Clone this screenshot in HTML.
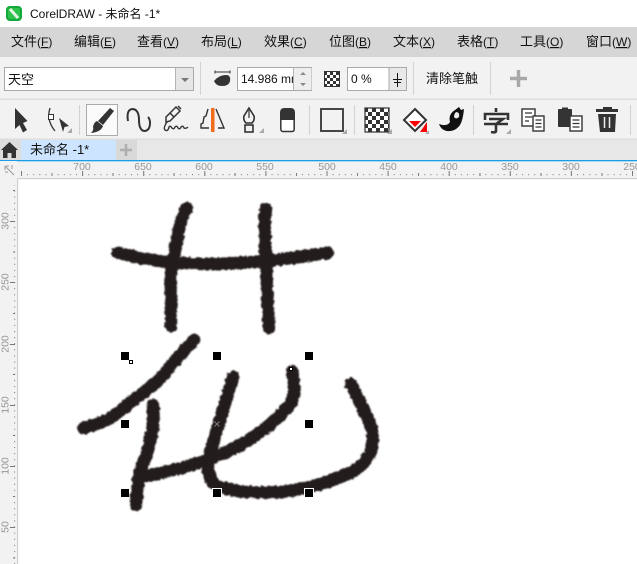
<!DOCTYPE html>
<html><head><meta charset="utf-8"><style>
html,body{margin:0;padding:0;background:#fff;width:637px;height:564px;overflow:hidden}
svg{display:block}
text{font-family:"Liberation Sans","Noto Sans CJK SC",sans-serif;fill:#111}
.m{font-size:13px}
.r{font-size:10.5px;fill:#979797;text-anchor:middle}
</style></head><body>
<svg width="637" height="564" viewBox="0 0 637 564" xmlns="http://www.w3.org/2000/svg">
<defs>
<filter id="rough" x="-5%" y="-5%" width="110%" height="110%">
<feTurbulence type="fractalNoise" baseFrequency="0.28" numOctaves="2" seed="4" result="n"/>
<feDisplacementMap in="SourceGraphic" in2="n" scale="4" xChannelSelector="R" yChannelSelector="G"/>
<feGaussianBlur stdDeviation="0.8"/>
</filter>
<pattern id="hd" x="21" y="0" width="6.11" height="10" patternUnits="userSpaceOnUse"><rect x="0" y="4" width="1" height="1.2" fill="#888"/></pattern>
<pattern id="vd" x="0" y="221" width="10" height="6.11" patternUnits="userSpaceOnUse"><rect x="4" y="0" width="1.2" height="1" fill="#888"/></pattern>
<pattern id="ck" width="6" height="6" patternUnits="userSpaceOnUse"><rect width="6" height="6" fill="#fff"/><rect width="3" height="3" fill="#333"/><rect x="3" y="3" width="3" height="3" fill="#333"/></pattern>
<pattern id="ck2" width="8" height="8" patternUnits="userSpaceOnUse"><rect width="8" height="8" fill="#fff"/><rect width="4" height="4" fill="#333"/><rect x="4" y="4" width="4" height="4" fill="#333"/></pattern>
</defs>

<!-- title bar -->
<rect width="637" height="27" fill="#fff"/>
<rect x="6" y="6" width="16" height="15" rx="4" fill="#12a83a"/>
<rect x="8" y="8" width="12" height="11" rx="2" fill="#2dc24e"/>
<path d="M10 9 L18 18" stroke="#e6f5e6" stroke-width="3"/>
<text x="30" y="18" style="font-size:12px">CorelDRAW - 未命名 -1*</text>

<!-- menu -->
<rect y="27" width="637" height="30" fill="#d6d6d6"/>
<g class="m">
<text class="m" x="11" y="46">文件<tspan style="font-size:12px">(<tspan text-decoration="underline">F</tspan>)</tspan></text>
<text class="m" x="74" y="46">编辑<tspan style="font-size:12px">(<tspan text-decoration="underline">E</tspan>)</tspan></text>
<text class="m" x="137" y="46">查看<tspan style="font-size:12px">(<tspan text-decoration="underline">V</tspan>)</tspan></text>
<text class="m" x="201" y="46">布局<tspan style="font-size:12px">(<tspan text-decoration="underline">L</tspan>)</tspan></text>
<text class="m" x="264" y="46">效果<tspan style="font-size:12px">(<tspan text-decoration="underline">C</tspan>)</tspan></text>
<text class="m" x="329" y="46">位图<tspan style="font-size:12px">(<tspan text-decoration="underline">B</tspan>)</tspan></text>
<text class="m" x="393" y="46">文本<tspan style="font-size:12px">(<tspan text-decoration="underline">X</tspan>)</tspan></text>
<text class="m" x="457" y="46">表格<tspan style="font-size:12px">(<tspan text-decoration="underline">T</tspan>)</tspan></text>
<text class="m" x="520" y="46">工具<tspan style="font-size:12px">(<tspan text-decoration="underline">O</tspan>)</tspan></text>
<text class="m" x="586" y="46">窗口<tspan style="font-size:12px">(<tspan text-decoration="underline">W</tspan>)</tspan></text>
</g>

<!-- property bar -->
<rect y="57" width="637" height="82" fill="#f2f2f2"/>
<rect y="98.500" width="637" height="1.200" fill="#d9d9d9"/>
<rect x="4.500" y="67.500" width="189" height="23" fill="#fff" stroke="#a9a9a9"/>
<rect x="176" y="68" width="17" height="22" fill="#e6e6e6"/>
<rect x="175" y="68" width="1" height="22" fill="#b5b5b5"/>
<path d="M181 78 h8 l-4 4 z" fill="#777"/>
<text class="m" x="8" y="84">天空</text>
<rect x="200" y="62" width="1" height="33" fill="#d2d2d2"/>
<path d="M215 72 h15 M215 70.500 v3 M230 70.500 v3" stroke="#333" stroke-width="1" fill="none"/>
<path d="M214 81 Q219 75 226 75 Q231 75 230 81 Q229 86 222 86 Q216 86 214 81 Z" fill="#333"/>
<rect x="237.500" y="67.500" width="74" height="23" fill="#fff" stroke="#a9a9a9"/>
<rect x="293.500" y="68" width="18" height="22" fill="#eee"/>
<rect x="293" y="68" width="1" height="22" fill="#b5b5b5"/>
<path d="M300 75 l3 -3 l3 3 z M300 83 l3 3 l3 -3 z" fill="#888"/>
<svg x="238" y="68" width="55" height="22"><text x="3" y="15" style="font-size:12px">14.986 mm</text></svg>
<rect x="324" y="71" width="16" height="16" fill="url(#ck)"/>
<rect x="324.500" y="71.500" width="15" height="15" fill="none" stroke="#333"/>
<rect x="347.500" y="67.500" width="59" height="23" fill="#fff" stroke="#a9a9a9"/>
<rect x="389" y="68" width="17" height="22" fill="#e8e8e8"/>
<rect x="388.500" y="68" width="1" height="22" fill="#a9a9a9"/>
<path d="M397.500 73 v14 M393 79.500 h9 M394 82.500 h7" stroke="#111" stroke-width="1" fill="none"/>
<text x="351" y="83" style="font-size:12px">0 %</text>
<rect x="413" y="62" width="1" height="33" fill="#d2d2d2"/>
<text class="m" x="426" y="83">清除笔触</text>
<rect x="490" y="62" width="1" height="33" fill="#d2d2d2"/>
<path d="M510 78.500 h17 M518.500 70 v17" stroke="#a8a8a8" stroke-width="3.500" fill="none"/>

<!-- toolbox -->
<path d="M15 108 L27.500 121 L23 123 L27 130 L23 132.500 L19.500 125 L15 129 Z" fill="#333"/>
<path d="M50 108 Q46 120 55 131" stroke="#333" stroke-width="1.300" fill="none"/>
<rect x="48.500" y="114.500" width="5" height="5" fill="#fff" stroke="#333"/>
<path d="M59 118 L69 126 L64.500 127 L63 132 Z" fill="#333"/>
<path d="M72 133 v-5 l-5 5 z" fill="#aaa"/>
<rect x="79" y="105" width="1" height="30" fill="#d2d2d2"/>
<rect x="86.500" y="104.500" width="31" height="31" fill="#fbfbfb" stroke="#aaa"/>
<path d="M110 108 L114 111 L103 125 L98 121 Z" fill="#333"/>
<path d="M97 121 L103 126 Q101 132 91 133 Q94 130 93 127 Q94 122 97 121 Z" fill="#333"/>
<path d="M128 121 Q126 109 133 109 Q139 110 139 120 Q139 131 145 131 Q150 130 150 123 Q150 119 148 117" stroke="#333" stroke-width="2" fill="none"/>
<path d="M166 117 L176 107 L180 111 L170 121 L166 122 Z" fill="none" stroke="#333" stroke-width="1.500"/>
<path d="M170 113 L174 117 M178 106 L181 109" stroke="#333" stroke-width="1.500"/>
<path d="M167 122 Q163 128 165 130 Q168 132 169 127 Q170 125 172 128 Q174 130 175 127 Q177 125 178 128 Q180 130 181 127 Q183 125 184 128 Q186 129 188 127" stroke="#333" stroke-width="1.400" fill="none"/>
<path d="M208 109 L206 116 L204 117 L203 123 L201 124 L201 128 L209 128 M216 109 L224 128 L218 128" stroke="#333" stroke-width="1.400" fill="none"/>
<rect x="211" y="108" width="3.500" height="24" fill="#f26b1a"/>
<path d="M249 108 L254 116 Q255 120 252 123 L246 123 Q243 120 244 116 Z" fill="none" stroke="#333" stroke-width="1.600"/>
<path d="M249 110 V118" stroke="#333" stroke-width="1.200"/>
<rect x="245" y="125" width="8" height="7" fill="none" stroke="#333" stroke-width="1.600"/>
<path d="M264 133 v-5 l-5 5 z" fill="#aaa"/>
<path d="M280 113 Q280 108 284 108 H291 Q295 108 295 113 V120 H280 Z" fill="#333"/>
<path d="M280.800 120 V129 Q281 131.500 283 131.500 H292 Q294.200 131.500 294.200 129 V120" fill="#fff" stroke="#333" stroke-width="1.500"/>
<rect x="309" y="105" width="1" height="30" fill="#d2d2d2"/>
<rect x="321" y="109" width="22" height="22" fill="none" stroke="#333" stroke-width="1.800"/>
<path d="M347 134 v-5 l-5 5 z" fill="#aaa"/>
<rect x="354" y="105" width="1" height="30" fill="#d2d2d2"/>
<rect x="365" y="108" width="24" height="24" fill="url(#ck2)"/>
<rect x="365" y="108" width="24" height="24" fill="none" stroke="#333" stroke-width="1.200"/>
<path d="M392 134 v-5 l-5 5 z" fill="#aaa"/>
<path d="M415 109 L426 120 L415 131 L404 120 Z" fill="#fff" stroke="#333" stroke-width="2"/>
<path d="M409 121 H421 L415 127 Z" fill="#f00"/>
<path d="M427 122 V132 H420 Z" fill="#f00"/>
<path d="M429 134 v-4 l-4 4 z" fill="#aaa"/>
<path d="M439 124 Q447 127 450 122 Q448 114 455 110 L459 107 L461 110 L464 109 Q463 120 460 125 Q455 132 447 131 Q441 130 439 124 Z" fill="#111"/>
<path d="M456 112 Q460 112 459 117 Q456 120 454 117 Q454 114 456 112 Z" fill="#eee"/>
<rect x="473" y="105" width="1" height="30" fill="#d2d2d2"/>
<path d="M496 108 V112 M485 120 V114 H508 V120 M489 119 H503 L496 124 V131 Q496 133 491 132 M484 124 H508" stroke="#333" stroke-width="2.600" fill="none"/>
<path d="M511 134 v-5 l-5 5 z" fill="#aaa"/>
<rect x="522" y="109" width="13" height="17" fill="#fff" stroke="#333" stroke-width="1.400"/>
<path d="M525 113 H532 M525 117 H532 M525 121 H529" stroke="#333" stroke-width="1.200"/>
<rect x="533" y="116" width="11" height="15" fill="#fff" stroke="#333" stroke-width="1.400"/>
<path d="M535.500 120 H541.500 M535.500 123.500 H541.500 M535.500 127 H541.500" stroke="#333" stroke-width="1.200"/>
<rect x="558" y="109" width="14" height="18" rx="1" fill="#333"/>
<rect x="562" y="107.500" width="6" height="3" fill="#333"/>
<rect x="570" y="116" width="12" height="15" fill="#fff" stroke="#333" stroke-width="1.400"/>
<path d="M572.500 120 H579.500 M572.500 123.500 H579.500 M572.500 127 H579.500" stroke="#333" stroke-width="1.200"/>
<path d="M596 109 H603 V107 H612 V109 H618 V112 H596 Z" fill="#333"/>
<path d="M598 114 H616 L615 132 H600 Z" fill="#333"/>
<path d="M604.500 117 V128 M609.500 117 V128" stroke="#eee" stroke-width="1.500"/>
<rect x="630" y="105" width="1" height="30" fill="#d2d2d2"/>

<!-- tab strip -->
<rect y="139" width="637" height="21" fill="#e7e7e7"/>
<rect y="138.500" width="637" height="1" fill="#d9d9d9"/>
<rect x="0" y="139" width="21" height="21" fill="#ddd"/>
<path d="M9.500 142 L18 150 H16 V158 H11.500 V153 H7.500 V158 H3 V150 H1 Z" fill="#333"/>
<rect x="21" y="140" width="95" height="20" fill="#cce4ff"/>
<text class="m" x="30" y="154">未命名 -1*</text>
<rect x="116" y="140" width="21" height="20" fill="#d9d9d9"/>
<path d="M120 150 H132 M126 144 V156" stroke="#aeaeae" stroke-width="2.500"/>
<rect y="160" width="637" height="1.400" fill="#1a9fe6"/>

<!-- rulers -->
<rect y="161.400" width="637" height="17" fill="#f2f2f2"/>
<rect y="161" x="0" width="17" height="403" fill="#f2f2f2"/>
<rect x="18" y="179" width="619" height="385" fill="#fff"/>
<rect x="17" y="178" width="620" height="1.200" fill="#cfcfcf"/>
<rect x="17" y="178" width="1.200" height="386" fill="#cfcfcf"/>
<path d="M5 166 H9 M5 166 V170 M6 167 L14 175 M12 165 V169 M5 172 H8" stroke="#999" stroke-width="1" fill="none"/>
<path d="M21.500 171 v5 M82.600 171 v5 M143.700 171 v5 M204.800 171 v5 M265.900 171 v5 M327 171 v5 M388.100 171 v5 M449.200 171 v5 M510.300 171 v5 M571.400 171 v5 M632.500 171 v5 M52 173 v3 M113 173 v3 M174 173 v3 M235 173 v3 M296.500 173 v3 M357.500 173 v3 M418.500 173 v3 M480 173 v3 M541 173 v3 M602 173 v3" stroke="#777" stroke-width="1" fill="none"/>
<rect x="21" y="174" width="616" height="2" fill="url(#hd)"/>
<text class="r" x="82" y="170">700</text>
<text class="r" x="143" y="170">650</text>
<text class="r" x="204" y="170">600</text>
<text class="r" x="265" y="170">550</text>
<text class="r" x="327" y="170">500</text>
<text class="r" x="388" y="170">450</text>
<text class="r" x="449" y="170">400</text>
<text class="r" x="510" y="170">350</text>
<text class="r" x="571" y="170">300</text>
<text class="r" x="632" y="170">250</text>
<rect x="12" y="185" width="5" height="379" fill="url(#vd)"/>
<path d="M10 221.500 h5 M10 282.500 h5 M10 344.500 h5 M10 405.500 h5 M10 466.500 h5 M10 527.500 h5 M13 190.500 h2 M13 252 h2 M13 313.500 h2 M13 374.500 h2 M13 435.500 h2 M13 496.500 h2 M13 558 h2" stroke="#777" stroke-width="1"/>
<text class="r" transform="translate(8.500 221) rotate(-90)">300</text>
<text class="r" transform="translate(8.500 282) rotate(-90)">250</text>
<text class="r" transform="translate(8.500 344) rotate(-90)">200</text>
<text class="r" transform="translate(8.500 405) rotate(-90)">150</text>
<text class="r" transform="translate(8.500 466) rotate(-90)">100</text>
<text class="r" transform="translate(8.500 527) rotate(-90)">50</text>

<!-- brush strokes -->
<g filter="url(#rough)" fill="none" stroke="#241a1a" stroke-width="12.500" stroke-linecap="round" stroke-linejoin="round">
<path d="M187 208 Q179 222 177 240 L173 262 Q170 275 171 290 L171 326"/>
<path d="M118 253 Q128 255 140 258 Q156 261 173 262 Q190 264 207 264 Q222 264 237 263 Q252 262 267 261 Q284 259 300 257 Q315 254 328 253"/>
<path d="M266 209 Q264 220 265 233 Q265 247 266 260 Q267 275 267 290 L269 328"/>
<path d="M194 340 Q183 352 173 363 Q165 373 157 382 Q145 392 133 400 Q118 414 107 420 Q96 425 84 428"/>
<path d="M153 405 Q154 416 153 427 Q151 440 147 453 Q142 465 139 477 Q137 492 136 505"/>
<path d="M138 478 Q155 474 173 470 Q190 466 207 460 Q222 454 237 447 Q253 438 267 427 Q285 412 291 403 Q296 392 294 385 L292 371"/>
<path d="M233 377 Q228 393 223 410 Q218 426 213 443 Q209 456 208 468 Q210 484 220 487 Q233 491 247 492 Q263 493 280 492 Q298 490 317 485 Q334 480 350 473 Q368 463 371 450 Q374 440 372 430 Q368 418 362 407 Q357 395 351 384"/>
</g>

<!-- selection handles -->
<g fill="#000">
<rect x="121" y="352" width="8" height="8"/>
<rect x="213" y="352" width="8" height="8"/>
<rect x="305" y="352" width="8" height="8"/>
<rect x="121" y="420" width="8" height="8"/>
<rect x="305" y="420" width="8" height="8"/>
<rect x="121" y="489" width="8" height="8"/>
<rect x="212.500" y="488.500" width="9" height="9" stroke="#fff" stroke-width="1"/>
<rect x="304.500" y="488.500" width="9" height="9" stroke="#fff" stroke-width="1"/>
</g>
<rect x="129.500" y="360.500" width="3" height="3" fill="#fff" stroke="#000"/>
<rect x="289.500" y="367.500" width="3" height="3" fill="#fff" stroke="#000"/>
<path d="M214.500 421.500 L219.500 426.500 M219.500 421.500 L214.500 426.500" stroke="#777" stroke-width="1.200"/>
</svg>
</body></html>
